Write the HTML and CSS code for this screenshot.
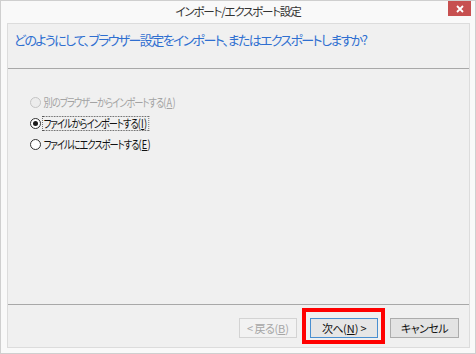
FILE: index.html
```html
<!DOCTYPE html>
<html lang="ja">
<head>
<meta charset="utf-8">
<link rel="stylesheet" href="styles.css">
</head>
<body>
<div class="window">
  <div class="titlebar">
    <span class="spacer"></span>
    <span class="title">インポート/エクスポート設定</span>
    <span class="close"><svg width="8" height="8" viewBox="0 0 8 8"><path d="M1 1L7 7M7 1L1 7" stroke="#fff" stroke-width="1.8"/></svg></span>
  </div>
  <div class="panel">
    <div class="header">
      <span class="question">どのようにして、ブラウザー設定をインポート、またはエクスポートしますか?</span>
    </div>
    <div class="content">
      <label class="option disabled"><span class="radio"></span><span class="text">別のブラウザーからインポートする<span class="key">(<u>A</u>)</span></span></label>
      <label class="option"><span class="radio checked"></span><span class="text focus">ファイルからインポートする<span class="key">(<u>I</u>)</span></span></label>
      <label class="option"><span class="radio"></span><span class="text">ファイルにエクスポートする<span class="key">(<u>E</u>)</span></span></label>
    </div>
    <div class="footer">
      <button class="btn back" disabled>&lt; 戻る<span class="key">(<u>B</u>)</span></button>
      <span class="highlight-wrap"><button class="btn next">次へ<span class="key">(<u>N</u>)</span> &gt;</button><span class="redbox"></span></span>
      <button class="btn cancel">キャンセル</button>
    </div>
  </div>
</div>
</body>
</html>
```
FILE: styles.css
```css
html, body {
  margin: 0;
  padding: 0;
}
body {
  width: 476px;
  height: 354px;
  font-family: "Noto Sans CJK JP", "Noto Sans", sans-serif;
  font-feature-settings: "palt";
}
.window {
  box-sizing: border-box;
  width: 476px;
  height: 354px;
  border: 1px solid #cfcfcf;
  background: #f9f9f9;
  display: flex;
  flex-direction: column;
}
.titlebar {
  height: 22px;
  display: grid;
  grid-template-columns: 1fr auto 1fr;
  align-items: start;
}
.title {
  font-size: 11.5px;
  line-height: 20px;
  color: #333;
  letter-spacing: -1.2px;
}
.close {
  justify-self: end;
  margin-right: 4px;
  width: 23px;
  height: 15px;
  background: #c75050;
  display: flex;
  align-items: center;
  justify-content: center;
}
.panel {
  flex: 1;
  margin: 0 5px 5px 6px;
  border: 1px solid #dcdcdc;
  background: #f0f0f0;
  display: flex;
  flex-direction: column;
}
.header {
  height: 44px;
  border-bottom: 1px solid #a8a8a8;
  box-sizing: content-box;
  padding: 0 6px;
}
.question {
  display: block;
  margin-top: 8px;
  font-size: 13px;
  line-height: 16px;
  color: #2f6fd0;
  letter-spacing: -1.65px;
}
.content {
  flex: 1;
  padding: 23px 0 0 22px;
  display: flex;
  flex-direction: column;
}
.option {
  display: flex;
  align-items: center;
  height: 21px;
  font-size: 11.5px;
  color: #111;
}
.option.disabled {
  color: #a3a3a3;
}
.radio {
  box-sizing: border-box;
  width: 11px;
  height: 11px;
  border: 1px solid #333;
  border-radius: 50%;
  background: #fff;
  display: flex;
  align-items: center;
  justify-content: center;
  margin-right: 1px;
  flex: none;
}
.disabled .radio {
  border-color: #c4c4c4;
  background: #ececec;
}
.radio.checked::after {
  content: "";
  width: 5px;
  height: 5px;
  border-radius: 50%;
  background: #1a1a1a;
}
.text {
  display: inline-block;
  white-space: nowrap;
  letter-spacing: -1.2px;
  line-height: 13px;
  padding: 0 1px;
  border: 1px dotted transparent;
  transform: scaleX(0.8);
  transform-origin: left center;
}
.text.focus {
  border-color: #555;
}
.key {
  letter-spacing: 0.3px;
}
u {
  text-decoration: underline;
}
.footer {
  border-top: 1px solid #a8a8a8;
  display: flex;
  justify-content: flex-end;
  align-items: flex-start;
  padding: 13px 10px 0 0;
  box-sizing: border-box;
  height: 43px;
}
.btn {
  font-family: inherit;
  font-feature-settings: "palt";
  font-size: 11px;
  letter-spacing: -0.5px;
  height: 20px;
  padding: 0;
  margin: 0;
  border: 1px solid #acacac;
  background: #e3e3e3;
  color: #111;
  line-height: 16px;
}
.btn .key {
  letter-spacing: 0;
}
.back {
  width: 58px;
  margin-right: 13px;
  color: #a6a6a6;
  border-color: #d3d3d3;
  background: #f2f2f2;
}
.next {
  width: 68px;
  border-color: #4a8fd0;
  background: #e6e6e6;
}
.cancel {
  width: 69px;
  margin-left: 12px;
}
.highlight-wrap {
  position: relative;
  display: flex;
}
.redbox {
  position: absolute;
  left: -8px;
  top: -10px;
  width: 83px;
  height: 36px;
  box-sizing: border-box;
  border: 4px solid #f00;
}
```
